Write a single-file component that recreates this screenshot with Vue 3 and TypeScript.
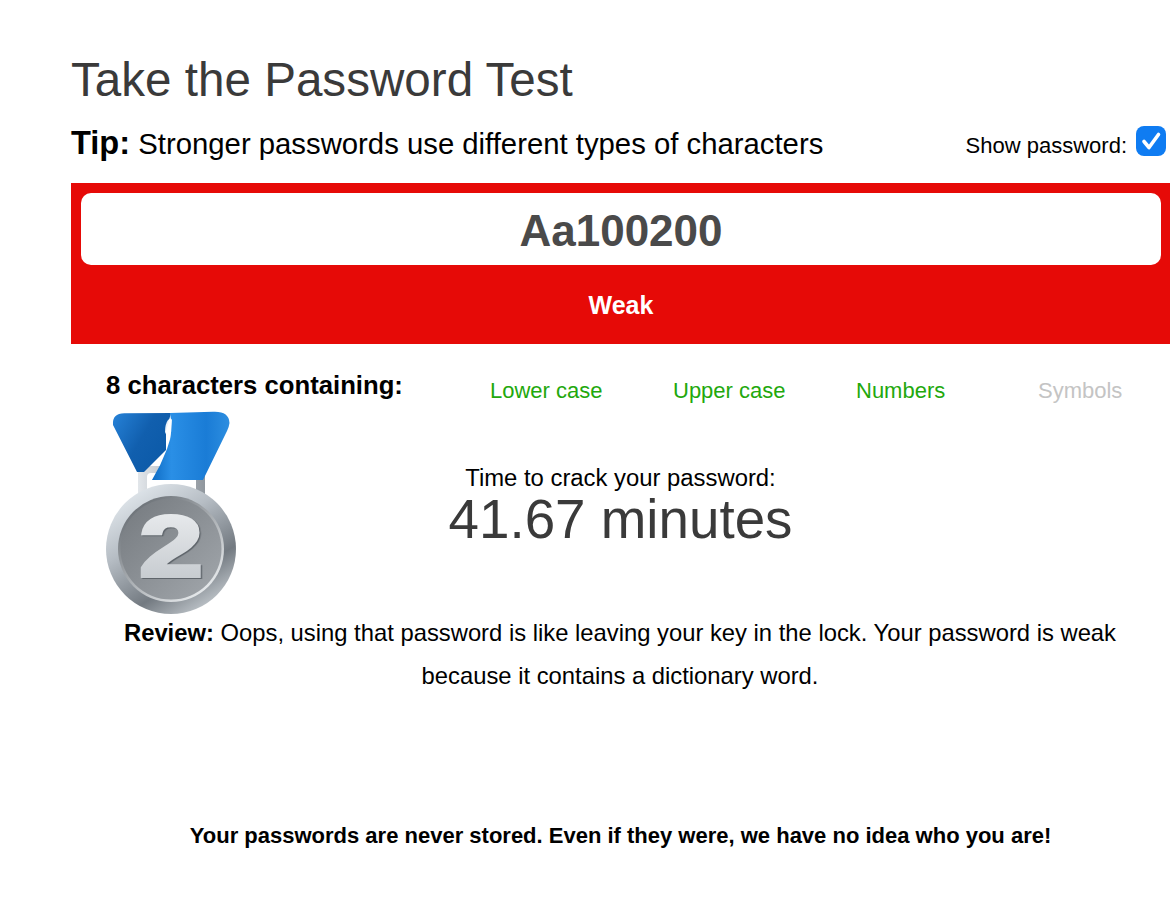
<script setup lang="ts">
const checks: { label: string; on: boolean }[] = [
  { label: 'Lower case', on: true },
  { label: 'Upper case', on: true },
  { label: 'Numbers', on: true },
  { label: 'Symbols', on: false },
]
</script>

<template>
  <main class="page">
    <h1 class="title">Take the Password Test</h1>
    <div class="tip-row">
      <p class="tip"><strong>Tip:</strong> Stronger passwords use different types of characters</p>
      <div class="show">
        <span class="show-label">Show password:</span>
        <span class="checkbox">
          <svg width="30" height="30" viewBox="0 0 30 30">
            <path d="M8 15.5l5 6L22.5 8.5" fill="none" stroke="#fff" stroke-width="3.6" stroke-linecap="round" stroke-linejoin="round" />
          </svg>
        </span>
      </div>
    </div>
    <section class="panel">
      <div class="field">Aa100200</div>
      <div class="rating">Weak</div>
    </section>
    <div class="criteria">
      <strong class="count">8 characters containing:</strong>
      <ul class="checks">
        <li v-for="c in checks" :key="c.label" :class="{ on: c.on }">{{ c.label }}</li>
      </ul>
    </div>
    <div class="result">
      <svg class="medal" width="134" height="206" viewBox="0 0 134 206">
        <defs>
          <linearGradient id="rib" x1="0" y1="0" x2="1" y2="0">
            <stop offset="0" stop-color="#0f6cc4" />
            <stop offset="0.25" stop-color="#2a8fe6" />
            <stop offset="0.7" stop-color="#1a7cd6" />
            <stop offset="1" stop-color="#2d8ee0" />
          </linearGradient>
          <linearGradient id="ribBack" x1="0" y1="0" x2="1" y2="0.6">
            <stop offset="0" stop-color="#2682d8" />
            <stop offset="0.55" stop-color="#115fae" />
            <stop offset="1" stop-color="#0c5aa8" />
          </linearGradient>
          <linearGradient id="rim" x1="0.15" y1="0.05" x2="0.75" y2="1">
            <stop offset="0" stop-color="#e3e9ee" />
            <stop offset="0.35" stop-color="#b6bdc4" />
            <stop offset="0.72" stop-color="#737a81" />
            <stop offset="1" stop-color="#c5cbd0" />
          </linearGradient>
          <linearGradient id="inner" x1="0" y1="0" x2="1" y2="1">
            <stop offset="0" stop-color="#74797e" />
            <stop offset="1" stop-color="#a3a8ad" />
          </linearGradient>
          <linearGradient id="ring" x1="0.1" y1="0" x2="0.9" y2="1">
            <stop offset="0" stop-color="#5f656b" />
            <stop offset="1" stop-color="#f4f7f9" />
          </linearGradient>
          <linearGradient id="num" x1="0" y1="0" x2="0" y2="1">
            <stop offset="0" stop-color="#eef0f2" />
            <stop offset="1" stop-color="#c0c5ca" />
          </linearGradient>
          <linearGradient id="bar" x1="0" y1="0" x2="1" y2="0">
            <stop offset="0" stop-color="#e2e6ea" />
            <stop offset="1" stop-color="#8f969d" />
          </linearGradient>
        </defs>
        <path d="M33 84V63Q33 55 41 55H92Q100 55 100 63V84H91V66Q91 62 87 62H46Q42 62 42 66V84Z" fill="url(#bar)" />
        <path d="M8 14Q7 2 20 2.3L66 2 61 20V39L39 61H32Z" fill="url(#ribBack)" />
        <path d="M65 2L108 .8Q124 0 124.5 12 124 16 122 20L98 69H47Q56 54 62 38 69 20 65 2Z" fill="url(#rib)" />
        <path d="M63 9Q66 6 67 9L65 29Q61 25 60 21 60 13 63 9Z" fill="#fff" opacity="0.92" />
        <circle cx="66" cy="138" r="65" fill="url(#rim)" />
        <circle cx="66" cy="138" r="53" fill="url(#ring)" />
        <circle cx="66" cy="138" r="50.5" fill="url(#inner)" />
        <g transform="translate(66 165) scale(1.32 1)">
          <text text-anchor="middle" class="medal-num" fill="url(#num)" stroke="url(#num)" stroke-width="4" stroke-linejoin="miter">2</text>
        </g>
      </svg>
      <div class="crack">
        <div class="crack-label">Time to crack your password:</div>
        <div class="crack-value">41.67 minutes</div>
      </div>
    </div>
    <p class="review"><strong>Review:</strong> Oops, using that password is like leaving your key in the lock. Your password is weak because it contains a dictionary word.</p>
    <p class="foot">Your passwords are never stored. Even if they were, we have no idea who you are!</p>
  </main>
</template>

<style>
html, body { margin: 0; background: #fff; }
</style>

<style scoped>
.page {
  width: 1170px;
  height: 903px;
  overflow: hidden;
  box-sizing: border-box;
  padding: 52px 0 0 71px;
  font-family: "Liberation Sans", Arial, sans-serif;
  color: #000;
  background: #fff;
}
.title {
  margin: 0;
  font-size: 47.6px;
  line-height: 56px;
  font-weight: 400;
  color: #3a3a3a;
}
.tip-row {
  display: flex;
  justify-content: space-between;
  align-items: flex-start;
  height: 75px;
}
.tip {
  margin: 15px 0 0;
  font-size: 29.3px;
  line-height: 40px;
}
.tip strong { font-size: 32.6px; }
.show {
  display: flex;
  align-items: flex-start;
  gap: 9px;
  margin-top: 18px;
  margin-right: 4px;
  font-size: 22px;
  line-height: 30px;
}
.show-label { padding-top: 5px; }
.checkbox {
  display: block;
  width: 30px;
  height: 30px;
  border-radius: 8px;
  background: #0f7cf2;
}
.checkbox svg { display: block; }
.panel {
  box-sizing: border-box;
  height: 161px;
  padding: 10px 9px 0 10px;
  background: #e60a07;
}
.field {
  height: 72px;
  border-radius: 10px;
  background: #fff;
  text-align: center;
  font-size: 44px;
  line-height: 76px;
  font-weight: 700;
  color: #4a4a4a;
}
.rating {
  margin-top: 21px;
  text-align: center;
  font-size: 25px;
  line-height: 38px;
  font-weight: 700;
  color: #fff;
}
.criteria {
  display: flex;
  height: 67px;
  padding: 25px 0 0 35px;
  box-sizing: border-box;
}
.count {
  font-size: 25.7px;
  line-height: 32px;
  width: 384px;
  flex: none;
}
.checks {
  display: flex;
  margin: 6px 0 0;
  padding: 0;
  list-style: none;
  font-size: 22px;
  line-height: 32px;
  color: #c4c4c4;
}
.checks li.on { color: #22a80c; }
.checks li:nth-child(1) { width: 183px; }
.checks li:nth-child(2) { width: 183px; }
.checks li:nth-child(3) { width: 182px; }
.checks li:nth-child(4) { width: 100px; }
.result {
  display: grid;
  grid-template-columns: 1fr auto 1fr;
  height: 200px;
}
.medal { margin-left: 34px; display: block; }
.crack {
  grid-column: 2;
  text-align: center;
  padding-top: 53px;
}
.crack-label { font-size: 23.85px; line-height: 28px; }
.crack-value { font-size: 54.75px; line-height: 54px; color: #3a3a3a; }
.medal-num {
  font-family: "Liberation Sans", Arial, sans-serif;
  font-weight: 700;
  font-size: 86px;
  filter: drop-shadow(1px 1px 0 #5f656b);
}
.review {
  width: 1000px;
  margin: 0 0 0 49px;
  text-align: center;
  font-size: 23.8px;
  line-height: 43px;
}
.foot {
  margin: 125px 0 0;
  text-align: center;
  font-size: 22px;
  line-height: 28px;
  font-weight: 700;
}
</style>
